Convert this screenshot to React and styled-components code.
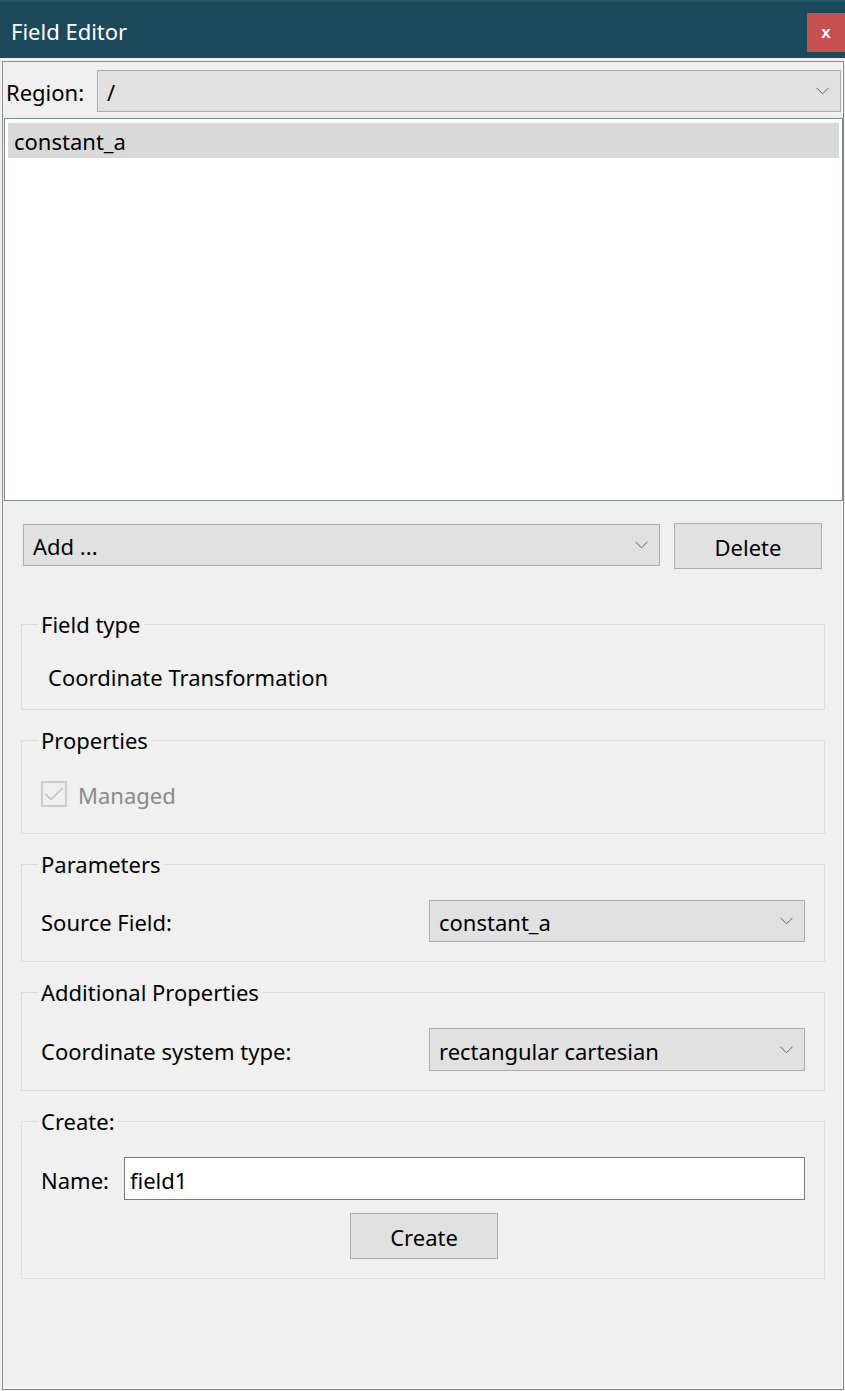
import React from 'react';
import styled, { createGlobalStyle } from 'styled-components';

const GlobalStyle = createGlobalStyle`
  html, body {
    margin: 0;
    padding: 0;
    background: #f0f0f0;
  }
  * {
    box-sizing: border-box;
  }
`;

const Window = styled.div`
  width: 845px;
  height: 1391px;
  display: flex;
  flex-direction: column;
  font-family: 'Noto Sans', 'Open Sans', sans-serif;
  font-size: 22px;
  color: #000;
`;

const TitleBar = styled.div`
  height: 58px;
  flex: none;
  background: #1b4a5b;
  border-top: 2px solid #24566a;
  display: flex;
  align-items: flex-start;
  justify-content: space-between;
  padding-left: 11px;
`;

const Title = styled.div`
  color: #fff;
  font-size: 22px;
  line-height: 56px;
  padding-top: 1px;
`;

const CloseButton = styled.button`
  width: 38px;
  height: 39px;
  margin-top: 11px;
  border: none;
  background: #c75050;
  color: #fff;
  font-family: 'Liberation Sans', sans-serif;
  font-size: 17px;
  font-weight: 700;
  display: flex;
  align-items: center;
  justify-content: center;
  padding: 0;
`;

const Body = styled.div`
  flex: 1;
  background: #f0f0f0;
  padding: 3px 1px 1px 2px;
  display: flex;
`;

const Frame = styled.div`
  flex: 1;
  border: 1px solid #8f8f8f;
  border-right-color: #7f8790;
  border-bottom-color: #7f8790;
  box-shadow: inset -1px -1px 0 #fff;
  display: flex;
  flex-direction: column;
`;

// Noto Sans sits a little higher than the original UI font; nudge labels down
const Label = styled.span`
  padding-top: 2px;
  white-space: nowrap;
`;

const RegionRow = styled.div`
  display: flex;
  align-items: center;
  padding: 8px 2px 0 3px;
`;

const RegionLabel = styled(Label)`
  width: 91px;
  flex: none;
`;

const ComboBox = styled.div`
  height: ${p => p.$h || 42}px;
  flex: ${p => (p.$w ? 'none' : '1')};
  width: ${p => (p.$w ? `${p.$w}px` : 'auto')};
  background: #e1e1e1;
  border: 1px solid #adadad;
  display: flex;
  align-items: center;
  justify-content: space-between;
  padding: 0 11px 0 9px;
`;

const Chevron = () => (
  <svg width="13" height="8" viewBox="0 0 13 8">
    <path d="M0.5 0.8 L6.5 6.8 L12.5 0.8" fill="none" stroke="#606060" strokeWidth="1" />
  </svg>
);

const Combo = ({ value, $w, $h }) => (
  <ComboBox $w={$w} $h={$h}>
    <Label>{value}</Label>
    <Chevron />
  </ComboBox>
);

const ListBox = styled.div`
  margin: 6px 0 0 1px;
  height: 383px;
  flex: none;
  background: #fff;
  border: 1px solid #828790;
  padding: 4px 3px;
`;

const ListItem = styled.div`
  height: 35px;
  line-height: 32px;
  padding: 2px 0 0 6px;
  background: ${p => (p.$selected ? '#d9d9d9' : 'transparent')};
`;

const Lower = styled.div`
  display: flex;
  flex-direction: column;
  padding: 22px 18px 0 18px;
`;

const AddRow = styled.div`
  display: flex;
  align-items: flex-start;
  gap: 14px;
  padding: 0 3px 0 2px;
  margin-bottom: 40px;
  & > ${ComboBox} {
    margin-top: 1px;
  }
`;

const Button = styled.button`
  width: 148px;
  height: 46px;
  flex: none;
  background: #e1e1e1;
  border: 1px solid #adadad;
  font-family: inherit;
  font-size: 22px;
  color: #000;
  padding: 1px 0 0;
`;

const Group = styled.fieldset`
  margin: 0 0 15px 0;
  padding: 0;
  border: 1px solid #dcdcdc;
  min-width: 0;
`;

const Legend = styled.legend`
  margin-left: 16px;
  padding: 0 3px;
  line-height: 30px;
  height: 30px;
`;

const GroupContent = styled.div`
  padding: ${p => p.$pad};
`;

const PlainText = styled.div`
  line-height: 30px;
  padding-left: 26px;
  height: 30px;
`;

const CheckRow = styled.div`
  display: flex;
  align-items: center;
  gap: 11px;
  padding-left: 19px;
  height: 30px;
  color: #8a8a8a;
`;

const CheckBox = styled.div`
  width: 26px;
  height: 26px;
  border: 2px solid #cccccc;
  display: flex;
  align-items: center;
  justify-content: center;
`;

const ParamRow = styled.div`
  display: grid;
  grid-template-columns: 1fr 376px;
  align-items: center;
  padding: 0 19px;
`;

const NameRow = styled.div`
  display: flex;
  align-items: center;
  padding: 0 19px;
  gap: 15px;
`;

const TextInput = styled.div`
  flex: 1;
  height: 43px;
  background: #fff;
  border: 1px solid #7a7a7a;
  display: flex;
  align-items: center;
  padding-left: 5px;
`;

const ButtonRow = styled.div`
  display: flex;
  justify-content: center;
  margin-top: 13px;
  padding-left: 2px;
`;

export default function App() {
  return (
    <>
      <GlobalStyle />
      <Window>
        <TitleBar>
          <Title>Field Editor</Title>
          <CloseButton>x</CloseButton>
        </TitleBar>
        <Body>
          <Frame>
            <RegionRow>
              <RegionLabel>Region:</RegionLabel>
              <Combo value="/" />
            </RegionRow>
            <ListBox>
              <ListItem $selected>constant_a</ListItem>
            </ListBox>
            <Lower>
              <AddRow>
                <Combo value="Add ..." />
                <Button>Delete</Button>
              </AddRow>

              <Group>
                <Legend>Field type</Legend>
                <GroupContent $pad="23px 0 17px">
                  <PlainText>Coordinate Transformation</PlainText>
                </GroupContent>
              </Group>

              <Group>
                <Legend>Properties</Legend>
                <GroupContent $pad="24px 0 24px">
                  <CheckRow>
                    <CheckBox>
                      <svg width="20" height="16" viewBox="0 0 20 16">
                        <path d="M1.5 8 L7 13.5 L18.5 2" fill="none" stroke="#bdbdbd" strokeWidth="1.4" />
                      </svg>
                    </CheckBox>
                    <Label>Managed</Label>
                  </CheckRow>
                </GroupContent>
              </Group>

              <Group>
                <Legend>Parameters</Legend>
                <GroupContent $pad="21px 0 19px">
                  <ParamRow>
                    <Label>Source Field:</Label>
                    <Combo value="constant_a" />
                  </ParamRow>
                </GroupContent>
              </Group>

              <Group>
                <Legend>Additional Properties</Legend>
                <GroupContent $pad="21px 0 19px">
                  <ParamRow>
                    <Label>Coordinate system type:</Label>
                    <Combo value="rectangular cartesian" $h={43} />
                  </ParamRow>
                </GroupContent>
              </Group>

              <Group>
                <Legend>Create:</Legend>
                <GroupContent $pad="21px 0 19px">
                  <NameRow>
                    <Label>Name:</Label>
                    <TextInput>
                      <Label>field1</Label>
                    </TextInput>
                  </NameRow>
                  <ButtonRow>
                    <Button>Create</Button>
                  </ButtonRow>
                </GroupContent>
              </Group>
            </Lower>
          </Frame>
        </Body>
      </Window>
    </>
  );
}
